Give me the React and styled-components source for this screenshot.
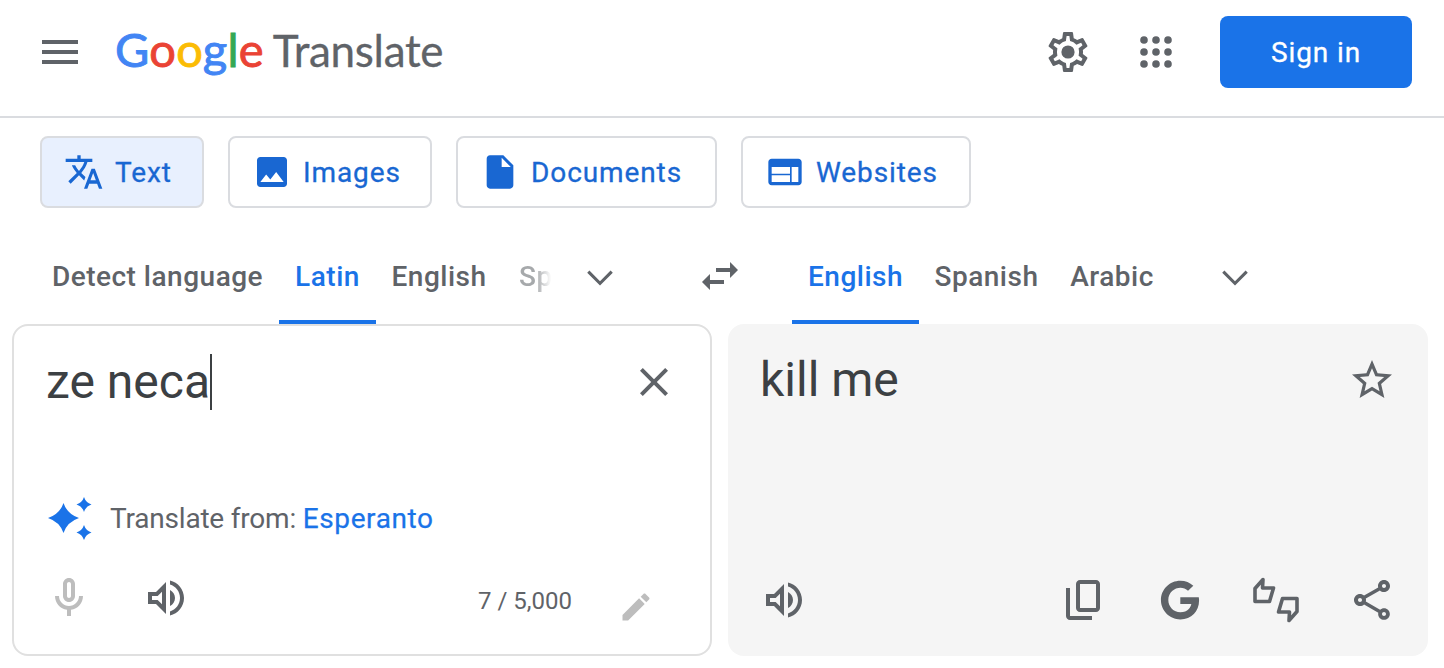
import React from "react";
import styled, { createGlobalStyle } from "styled-components";
import { FaGoogle } from "react-icons/fa";

const paths = {
  menu: "M3 18h18v-2H3v2zm0-5h18v-2H3v2zm0-7v2h18V6H3z",
  settings:
    "M19.43 12.98c.04-.32.07-.64.07-.98 0-.34-.03-.66-.07-.98l2.11-1.65c.19-.15.24-.42.12-.64l-2-3.46c-.09-.16-.26-.25-.44-.25-.06 0-.12.01-.17.03l-2.49 1c-.52-.4-1.08-.73-1.69-.98l-.38-2.65C14.46 2.18 14.25 2 14 2h-4c-.25 0-.46.18-.49.42l-.38 2.65c-.61.25-1.17.59-1.69.98l-2.49-1c-.06-.02-.12-.03-.18-.03-.17 0-.34.09-.43.25l-2 3.46c-.13.22-.07.49.12.64l2.11 1.65c-.04.32-.07.65-.07.98 0 .33.03.66.07.98l-2.11 1.65c-.19.15-.24.42-.12.64l2 3.46c.09.16.26.25.44.25.06 0 .12-.01.17-.03l2.49-1c.52.4 1.08.73 1.69.98l.38 2.65c.03.24.24.42.49.42h4c.25 0 .46-.18.49-.42l.38-2.65c.61-.25 1.17-.59 1.69-.98l2.49 1c.06.02.12.03.18.03.17 0 .34-.09.43-.25l2-3.46c.12-.22.07-.49-.12-.64l-2.11-1.65zm-1.98-1.71c.04.31.05.52.05.73 0 .21-.02.43-.05.73l-.14 1.13.89.7 1.08.84-.7 1.21-1.27-.51-1.04-.42-.9.68c-.43.32-.84.56-1.25.73l-1.06.43-.16 1.13-.2 1.35h-1.4l-.19-1.35-.16-1.13-1.06-.43c-.43-.18-.83-.41-1.23-.71l-.91-.7-1.06.43-1.27.51-.7-1.21 1.08-.84.89-.7-.14-1.13c-.03-.31-.05-.54-.05-.74s.02-.43.05-.73l.14-1.13-.89-.7-1.08-.84.7-1.21 1.27.51 1.04.42.9-.68c.43-.32.84-.56 1.25-.73l1.06-.43.16-1.13.2-1.35h1.39l.19 1.35.16 1.13 1.06.43c.43.18.83.41 1.23.71l.91.7 1.06-.43 1.27-.51.7 1.21-1.07.85-.89.7.14 1.13z",
  translate:
    "M12.87 15.07l-2.54-2.51.03-.03c1.74-1.94 2.98-4.17 3.71-6.53H17V4h-7V2H8v2H1v1.99h11.17C11.5 7.92 10.44 9.75 9 11.35 8.07 10.32 7.3 9.19 6.69 8h-2c.73 1.63 1.73 3.17 2.98 4.56l-5.09 5.02L4 19l5-5 3.11 3.11.76-2.04zM18.5 10h-2L12 22h2l1.12-3h4.75L21 22h2l-4.5-12zm-2.62 7l1.62-4.33L19.12 17h-3.24z",
  image:
    "M21 19V5c0-1.1-.9-2-2-2H5c-1.1 0-2 .9-2 2v14c0 1.1.9 2 2 2h14c1.1 0 2-.9 2-2zM8.5 13.5l2.5 3.01L14.5 12l4.5 6H5l3.5-4.5z",
  doc: "M6 2c-1.1 0-1.99.9-1.99 2L4 20c0 1.1.89 2 1.99 2H18c1.1 0 2-.9 2-2V8l-6-6H6zm7 7V3.5L18.5 9H13z",
  web: "M20 4H4c-1.1 0-1.99.9-1.99 2L2 18c0 1.1.9 2 2 2h16c1.1 0 2-.9 2-2V6c0-1.1-.9-2-2-2zm-5 14H4v-4h11v4zm0-5H4V9h11v4zm5 5h-4V9h4v9z",
  chevron: "M17.3 9.3L12 14.6 6.7 9.3 5.6 10.4l6.4 6.4 6.4-6.4z",
  swap: "M6.99 11L3 15l3.99 4v-3H14v-2H6.99v-3zM21 9l-3.99-4v3H10v2h7.01v3L21 9z",
  close:
    "M19 6.41L17.59 5 12 10.59 6.41 5 5 6.41 10.59 12 5 17.59 6.41 19 12 13.41 17.59 19 19 17.59 13.41 12z",
  star: "M22 9.24l-7.19-.62L12 2 9.19 8.63 2 9.24l5.46 4.73L5.82 21 12 17.27 18.18 21l-1.63-7.03L22 9.24zM12 15.4l-3.76 2.27 1-4.28-3.32-2.88 4.38-.38L12 6.1l1.71 4.04 4.38.38-3.32 2.88 1 4.28L12 15.4z",
  mic: "M12 14c1.66 0 3-1.34 3-3V5c0-1.66-1.34-3-3-3S9 3.34 9 5v6c0 1.66 1.34 3 3 3zm-1-9c0-.55.45-1 1-1s1 .45 1 1v6c0 .55-.45 1-1 1s-1-.45-1-1V5zm6 6c0 2.76-2.24 5-5 5s-5-2.24-5-5H5c0 3.53 2.61 6.43 6 6.92V21h2v-3.08c3.39-.49 6-3.39 6-6.92h-2z",
  volume:
    "M3 9v6h4l5 5V4L7 9H3zm7-.17v6.34L7.83 13H5v-2h2.83L10 8.83zM16.5 12c0-1.77-1.02-3.29-2.5-4.03v8.05c1.48-.74 2.5-2.26 2.5-4.02zM14 3.23v2.06c2.89.86 5 3.54 5 6.71s-2.11 5.85-5 6.71v2.06c4.01-.91 7-4.49 7-8.77 0-4.28-2.99-7.86-7-8.77z",
  edit: "M3 17.25V21h3.75L17.81 9.94l-3.75-3.75L3 17.25zM20.71 7.04c.39-.39.39-1.02 0-1.41l-2.34-2.34c-.39-.39-1.02-.39-1.41 0l-1.83 1.83 3.75 3.75 1.83-1.83z",
  copy: "M16 20H5V6H3v14c0 1.1.9 2 2 2h11v-2zm4-4V4c0-1.1-.9-2-2-2h-8c-1.1 0-2 .9-2 2v12c0 1.1.9 2 2 2h8c1.1 0 2-.9 2-2zm-2 0h-8V4h8v12z",
  share:
    "M18 16.08c-.76 0-1.44.3-1.96.77L8.91 12.7c.05-.23.09-.46.09-.7s-.04-.47-.09-.7l7.05-4.11c.54.5 1.25.81 2.04.81 1.66 0 3-1.34 3-3s-1.34-3-3-3-3 1.34-3 3c0 .24.04.47.09.7L8.04 9.81C7.5 9.31 6.79 9 6 9c-1.66 0-3 1.34-3 3s1.34 3 3 3c.79 0 1.5-.31 2.04-.81l7.12 4.16c-.05.21-.08.43-.08.65 0 1.61 1.31 2.92 2.92 2.92s2.92-1.31 2.92-2.92c0-1.61-1.31-2.92-2.92-2.92zM18 4c.55 0 1 .45 1 1s-.45 1-1 1-1-.45-1-1 .45-1 1-1zM6 13c-.55 0-1-.45-1-1s.45-1 1-1 1 .45 1 1-.45 1-1 1zm12 7.02c-.55 0-1-.45-1-1s.45-1 1-1 1 .45 1 1-.45 1-1 1z",
};

const Icon = ({ name, size = 48, color = "#5f6368" }) => (
  <Svg width={size} height={size} viewBox="0 0 24 24" fill={color}>
    <path d={paths[name]} />
  </Svg>
);

const tabs = [
  { label: "Text", icon: "translate", width: 164, active: true },
  { label: "Images", icon: "image", width: 204 },
  { label: "Documents", icon: "doc", width: 261 },
  { label: "Websites", icon: "web", width: 230 },
];

const App = () => {
  return (
    <Page>
      <GlobalStyle />
      <Header>
        <Icon name="menu" />
        <Logo>
          <Wordmark>
            <Letter $c="#4285f4">G</Letter>
            <Letter $c="#ea4335">o</Letter>
            <Letter $c="#fbbc05">o</Letter>
            <Letter $c="#4285f4">g</Letter>
            <Letter $c="#34a853">l</Letter>
            <Letter $c="#ea4335">e</Letter>
          </Wordmark>
          <ProductName>Translate</ProductName>
        </Logo>
        <HeaderRight>
          <Svg width="48" height="48" viewBox="0 0 24 24" fill="#5f6368">
            <path d={paths.settings} />
            <circle cx="12" cy="12" r="3.3" />
          </Svg>
          <AppsIcon width="48" height="48" viewBox="0 0 24 24" fill="#5f6368">
            {[6, 12, 18].map((y) =>
              [6, 12, 18].map((x) => (
                <circle key={`${x}-${y}`} cx={x} cy={y} r="1.9" />
              ))
            )}
          </AppsIcon>
          <SignIn>Sign in</SignIn>
        </HeaderRight>
      </Header>

      <ModeBar>
        {tabs.map((tab) => (
          <ModeTab key={tab.label} $w={tab.width} $active={tab.active}>
            <Icon name={tab.icon} size={40} color="#1967d2" />
            {tab.label}
          </ModeTab>
        ))}
      </ModeBar>

      <LangBar>
        <LangTab $w={243}>Detect language</LangTab>
        <LangTab $w={97} $active>
          Latin
        </LangTab>
        <LangTab $w={126}>English</LangTab>
        <FadedLang>Sp</FadedLang>
        <Chevron>
          <Icon name="chevron" />
        </Chevron>
        <SwapButton>
          <Icon name="swap" />
        </SwapButton>
        <LangTab $w={127} $active>
          English
        </LangTab>
        <LangTab $w={135}>Spanish</LangTab>
        <LangTab $w={116}>Arabic</LangTab>
        <TargetChevron>
          <Icon name="chevron" />
        </TargetChevron>
      </LangBar>

      <Panels>
        <SourcePanel>
          <TextRow>
            <SourceText>
              ze neca
              <Caret />
            </SourceText>
            <RowIcon>
              <Icon name="close" />
            </RowIcon>
          </TextRow>
          <DetectRow>
            <svg width="44" height="46" viewBox="0 0 44 46" fill="#1a73e8">
              <path d="M15.500 8Q19.300 19.200 31 23Q19.300 26.800 15.500 38Q11.700 26.800 0 23Q11.700 19.200 15.500 8Z" />
              <path d="M36 2Q37.800 7.700 43.500 9.500Q37.800 11.300 36 17Q34.200 11.300 28.500 9.500Q34.200 7.700 36 2Z" />
              <path d="M36 30Q37.800 35.700 43.500 37.500Q37.800 39.300 36 45Q34.200 39.300 28.500 37.500Q34.200 35.700 36 30Z" />
            </svg>
            <DetectLabel>
              Translate from: <DetectLink>Esperanto</DetectLink>
            </DetectLabel>
          </DetectRow>
          <SourceFooter>
            <Icon name="mic" color="#bdbdbd" />
            <SpeakerGap>
              <Icon name="volume" />
            </SpeakerGap>
            <Count>7 / 5,000</Count>
            <PencilSlot>
              <Icon name="edit" size={36} color="#bdbdbd" />
            </PencilSlot>
          </SourceFooter>
        </SourcePanel>

        <TargetPanel>
          <TextRow>
            <TargetText>kill me</TargetText>
            <RowIcon>
              <Icon name="star" />
            </RowIcon>
          </TextRow>
          <TargetFooter>
            <Icon name="volume" />
            <ActionGroup>
              <Icon name="copy" />
              <GoogleSlot>
                <FaGoogle size={40} color="#5f6368" />
              </GoogleSlot>
              <svg
                width="48"
                height="48"
                viewBox="0 0 48 48"
                fill="none"
                stroke="#5f6368"
                strokeWidth="3.6"
                strokeLinejoin="round"
              >
                <path d="M11 3.500 3 12.500V25.500H17.500L21.500 12H10.500Z" />
                <path d="M37 44.500 45 35.500V22.500H30.500L26.500 36H37.500Z" />
              </svg>
              <Icon name="share" />
            </ActionGroup>
          </TargetFooter>
        </TargetPanel>
      </Panels>
    </Page>
  );
};

export default App;

const GlobalStyle = createGlobalStyle`
  html, body {
    margin: 0;
    padding: 0;
    background: #fff;
  }
  * {
    box-sizing: border-box;
  }
`;
const Page = styled.div`
  width: 1444px;
  height: 668px;
  overflow: hidden;
  font-family: Roboto, "Liberation Sans", sans-serif;
  color: #3c4043;
`;
const Svg = styled.svg`
  display: block;
  flex-shrink: 0;
`;
const Header = styled.header`
  display: flex;
  align-items: center;
  height: 118px;
  padding: 0 32px 12px 36px;
  border-bottom: 2px solid #dadce0;
`;
const Logo = styled.div`
  display: flex;
  align-items: baseline;
  margin-left: 31px;
  padding-bottom: 6px;
`;
const Wordmark = styled.div`
  font-family: Lato, sans-serif;
  font-size: 47px;
  letter-spacing: 0.2px;
`;
const Letter = styled.span`
  color: ${(p) => p.$c};
  -webkit-text-stroke: 0.9px ${(p) => p.$c};
`;
const ProductName = styled.div`
  margin-left: 9px;
  font-family: Lato, sans-serif;
  font-size: 44px;
  color: #5f6368;
  letter-spacing: -0.3px;
  -webkit-text-stroke: 0.3px #5f6368;
`;
const HeaderRight = styled.div`
  display: flex;
  align-items: center;
  margin-left: auto;
`;
const AppsIcon = styled.svg`
  display: block;
  margin-left: 40px;
`;
const SignIn = styled.button`
  width: 192px;
  height: 72px;
  margin-left: 40px;
  border: 0;
  border-radius: 8px;
  background: #1a73e8;
  color: #fff;
  font-family: Roboto, sans-serif;
  font-size: 28px;
  font-weight: 400;
  letter-spacing: 0.9px;
  -webkit-text-stroke: 0.3px #fff;
`;
const ModeBar = styled.nav`
  display: flex;
  gap: 24px;
  padding: 18px 40px 0;
`;
const ModeTab = styled.div`
  display: flex;
  align-items: center;
  gap: 11px;
  width: ${(p) => p.$w}px;
  height: 72px;
  padding-left: 22px;
  border: 2px solid #dadce0;
  border-radius: 8px;
  background: ${(p) => (p.$active ? "#e8f0fe" : "#fff")};
  color: #1967d2;
  font-size: 28px;
  font-weight: 400;
  letter-spacing: 0.9px;
  white-space: nowrap;
  -webkit-text-stroke: 0.3px #1967d2;
`;
const LangBar = styled.div`
  display: flex;
  align-items: flex-end;
  height: 116px;
  padding-left: 36px;
`;
const LangTab = styled.div`
  display: flex;
  align-items: center;
  justify-content: center;
  flex: none;
  width: ${(p) => p.$w}px;
  height: 89px;
  padding-bottom: 2px;
  border-bottom: 4px solid ${(p) => (p.$active ? "#1a73e8" : "transparent")};
  color: ${(p) => (p.$active ? "#1a73e8" : "#5f6368")};
  font-size: 28px;
  font-weight: 500;
  letter-spacing: 0.5px;
  white-space: nowrap;
`;
const FadedLang = styled(LangTab)`
  justify-content: flex-start;
  width: 34px;
  margin-left: 17px;
  opacity: 0.55;
  -webkit-mask-image: linear-gradient(to right, #000 50%, transparent 95%);
  mask-image: linear-gradient(to right, #000 50%, transparent 95%);
`;
const Chevron = styled.div`
  align-self: flex-end;
  margin-left: 23px;
  height: 72px;
`;
const SwapButton = styled.div`
  height: 72px;
  margin-left: 72px;
  margin-right: 48px;
`;
const TargetChevron = styled(Chevron)`
  margin-left: 41px;
`;
const Panels = styled.div`
  display: flex;
  gap: 16px;
  padding-left: 12px;
`;
const SourcePanel = styled.section`
  display: flex;
  flex-direction: column;
  width: 700px;
  height: 332px;
  padding: 28px 32px 32px;
  border: 2px solid #e0e0e0;
  border-radius: 16px;
`;
const TargetPanel = styled.section`
  display: flex;
  flex-direction: column;
  width: 700px;
  height: 332px;
  padding: 28px 32px 32px;
  border-radius: 16px;
  background: #f5f5f5;
`;
const TextRow = styled.div`
  display: flex;
  justify-content: space-between;
  align-items: flex-start;
  height: 56px;
`;
const RowIcon = styled.div`
  margin-top: 4px;
`;
const SourceText = styled.div`
  display: flex;
  align-items: stretch;
  font-size: 48px;
  line-height: 56px;
`;
const TargetText = styled.div`
  font-size: 48px;
  line-height: 56px;
`;
const Caret = styled.span`
  width: 2px;
  height: 56px;
  background: #3c4043;
`;
const DetectRow = styled.div`
  display: flex;
  align-items: center;
  gap: 18px;
  height: 48px;
  margin-top: auto;
  margin-left: 2px;
`;
const DetectLabel = styled.div`
  color: #5f6368;
  font-size: 28px;
  letter-spacing: -0.2px;
`;
const DetectLink = styled.span`
  color: #1a73e8;
  letter-spacing: 0.6px;
  -webkit-text-stroke: 0.25px #1a73e8;
`;
const SourceFooter = styled.div`
  display: flex;
  align-items: center;
  height: 48px;
  margin-top: 32px;
  margin-left: -1px;
  margin-right: 24px;
`;
const SpeakerGap = styled.div`
  margin-left: 49px;
`;
const Count = styled.div`
  margin-left: auto;
  padding-top: 6px;
  color: #5f6368;
  font-size: 24px;
`;
const PencilSlot = styled.div`
  margin-left: 46px;
  margin-top: 18px;
`;
const TargetFooter = styled.div`
  display: flex;
  align-items: center;
  height: 48px;
  margin-top: auto;
`;
const ActionGroup = styled.div`
  display: flex;
  gap: 48px;
  margin-left: auto;
`;
const GoogleSlot = styled.div`
  display: flex;
  align-items: center;
  justify-content: center;
  width: 48px;
  height: 48px;
`;
